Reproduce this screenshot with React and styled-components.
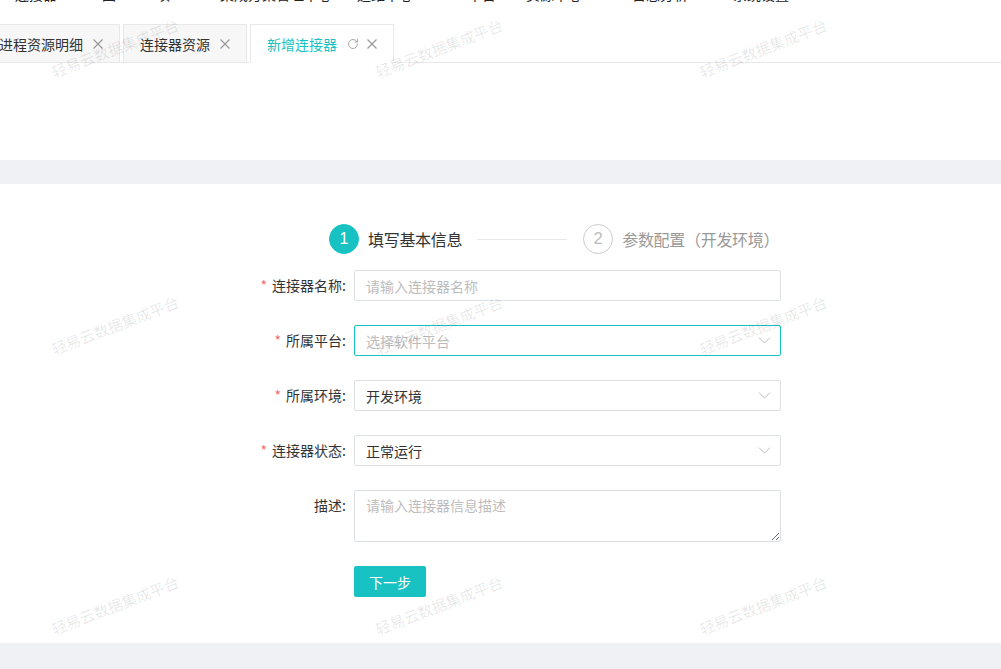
import React from "react";
import styled, { createGlobalStyle } from "styled-components";
import { RotateCw, ChevronDown } from "lucide-react";

const GlobalStyle = createGlobalStyle`
  html, body {
    margin: 0;
    padding: 0;
    background: #fff;
    font-family: "Noto Sans CJK SC", "Noto Sans", sans-serif;
    color: #333;
  }
  * { box-sizing: border-box; }
`;

const TEAL = "#19c2c2";

const menu = [
  { text: "连接器", ml: 15 },
  { text: "图", ml: 45 },
  { text: "项", ml: 40 },
  { text: "集成方案管理中心", ml: 50 },
  { text: "运维中心", ml: 25 },
  { text: "平台", ml: 55 },
  { text: "资源中心", ml: 30 },
  { text: "日志分析", ml: 50 },
  { text: "系统设置", ml: 45 },
];

const fields = [
  { label: "连接器名称", required: true, kind: "input", placeholder: "请输入连接器名称" },
  { label: "所属平台", required: true, kind: "select", placeholder: "选择软件平台", focus: true },
  { label: "所属环境", required: true, kind: "select", value: "开发环境" },
  { label: "连接器状态", required: true, kind: "select", value: "正常运行" },
  { label: "描述", kind: "textarea", placeholder: "请输入连接器信息描述" },
];

const marks = [];
[48, 325, 605].forEach((y) =>
  [115, 439, 763].forEach((x) => marks.push({ x, y }))
);

const CloseIcon = () => (
  <svg width="10" height="10" viewBox="0 0 10 10">
    <path d="M0.5 0.5 L9.5 9.5 M9.5 0.5 L0.5 9.5" stroke="#999" strokeWidth="1.2" fill="none" />
  </svg>
);

function App() {
  return (
    <Page>
      <GlobalStyle />
      <Nav>
        <NavRow>
          {menu.map((m, i) => (
            <NavItem key={i} $ml={m.ml}>{m.text}</NavItem>
          ))}
        </NavRow>
      </Nav>

      <TabBar>
        <Tab>
          进程资源明细
          <TabIcons><CloseIcon /></TabIcons>
        </Tab>
        <Tab>
          连接器资源
          <TabIcons><CloseIcon /></TabIcons>
        </Tab>
        <Tab $active>
          新增连接器
          <TabIcons>
            <RotateCw size={12} strokeWidth={1.7} />
            <CloseIcon />
          </TabIcons>
        </Tab>
      </TabBar>

      <TopBlank />
      <GrayBand $h={24} />

      <Card>
        <Steps>
          <StepCircle $active>1</StepCircle>
          <StepTitle $active>填写基本信息</StepTitle>
          <StepLine />
          <StepCircle>2</StepCircle>
          <StepTitle>参数配置（开发环境）</StepTitle>
        </Steps>

        <Form>
          {fields.map((f) => (
            <Row key={f.label} $tall={f.kind === "textarea"}>
              <Label>
                {f.required && <Star>*</Star>}
                {f.label}:
              </Label>
              {f.kind === "input" && <TextInput placeholder={f.placeholder} />}
              {f.kind === "textarea" && <TextArea placeholder={f.placeholder} />}
              {f.kind === "select" && (
                <Select $focus={f.focus}>
                  {f.value ? <span>{f.value}</span> : <Placeholder>{f.placeholder}</Placeholder>}
                  <ChevronDown size={21} strokeWidth={1} color="#b4b4b4" />
                </Select>
              )}
            </Row>
          ))}
          <ButtonRow>
            <NextButton>下一步</NextButton>
          </ButtonRow>
        </Form>
      </Card>

      <GrayBand $h={26} />

      {marks.map((m, i) => (
        <Watermark key={i} style={{ left: m.x, top: m.y }}>
          轻易云数据集成平台
        </Watermark>
      ))}
    </Page>
  );
}

const Page = styled.div`
  position: relative;
  width: 1001px;
  height: 669px;
  overflow: hidden;
  background: #fff;
`;

const Nav = styled.div`
  height: 8px;
  overflow: hidden;
`;

const NavRow = styled.div`
  display: flex;
  margin-top: -16px;
  height: 20px;
  align-items: flex-end;
`;

const NavItem = styled.span`
  margin-left: ${(p) => p.$ml}px;
  font-size: 14px;
  line-height: 20px;
  color: #222;
  white-space: nowrap;
`;

const TabBar = styled.div`
  display: flex;
  gap: 3px;
  margin-top: 16px;
  margin-left: -18px;
  height: 39px;
  border-bottom: 1px solid #e8e8e8;
  align-items: flex-end;
`;

const Tab = styled.div`
  display: flex;
  align-items: center;
  height: ${(p) => (p.$active ? "39px" : "38px")};
  margin-bottom: ${(p) => (p.$active ? "-1px" : "0")};
  padding: 0 16px 0 16px;
  font-size: 14px;
  color: ${(p) => (p.$active ? TEAL : "#333")};
  background: ${(p) => (p.$active ? "#fff" : "#f7f7f7")};
  border: 1px solid #e8e8e8;
  border-bottom: ${(p) => (p.$active ? "1px solid #fff" : "none")};
  white-space: nowrap;
`;

const TabIcons = styled.span`
  display: flex;
  align-items: center;
  gap: 8px;
  margin-left: 10px;
  color: #999;
`;

const TopBlank = styled.div`
  height: 97px;
`;

const GrayBand = styled.div`
  height: ${(p) => p.$h}px;
  background: #f0f1f5;
`;

const Card = styled.div`
  height: 459px;
  padding-top: 40px;
`;

const Steps = styled.div`
  display: flex;
  align-items: center;
  margin-left: 329px;
  height: 30px;
`;

const StepCircle = styled.div`
  width: 30px;
  height: 30px;
  border-radius: 50%;
  display: flex;
  align-items: center;
  justify-content: center;
  font-size: 16px;
  font-family: "Liberation Sans", Arial, sans-serif;
  color: ${(p) => (p.$active ? "#fff" : "#bbb")};
  background: ${(p) => (p.$active ? TEAL : "#fff")};
  border: 1px solid ${(p) => (p.$active ? TEAL : "#ccc")};
`;

const StepTitle = styled.div`
  margin-left: 9px;
  font-size: 16px;
  letter-spacing: -0.3px;
  color: ${(p) => (p.$active ? "#333" : "#999")};
`;

const StepLine = styled.div`
  width: 90px;
  height: 1px;
  background: #e8e8e8;
  margin: 0 16px 0 15px;
`;

const Form = styled.div`
  display: flex;
  flex-direction: column;
  gap: 24px;
  margin-top: 16px;
  margin-left: 250px;
  width: 531px;
`;

const Row = styled.div`
  display: grid;
  grid-template-columns: 104px 1fr;
  align-items: start;
  height: ${(p) => (p.$tall ? "52px" : "31px")};
`;

const Label = styled.div`
  text-align: right;
  padding-right: 8px;
  font-size: 14px;
  line-height: 31px;
  color: #333;
  white-space: nowrap;
`;

const Star = styled.span`
  color: #f56c6c;
  margin-right: 5px;
`;

const fieldBase = `
  width: 100%;
  border: 1px solid #dcdfe6;
  border-radius: 2px;
  font-size: 14px;
  font-family: "Noto Sans CJK SC", "Noto Sans", sans-serif;
  color: #333;
  padding: 0 11px;
  outline: none;
  background: #fff;
  &::placeholder { color: #bdbdbd; }
`;

const TextInput = styled.input`
  ${fieldBase}
  height: 31px;
`;

const TextArea = styled.textarea`
  ${fieldBase}
  height: 52px;
  padding-top: 4px;
  resize: vertical;
  line-height: 20px;
`;

const Select = styled.div`
  ${fieldBase}
  height: 31px;
  display: flex;
  align-items: center;
  justify-content: space-between;
  padding-right: 5px;
  border-color: ${(p) => (p.$focus ? TEAL : "#dcdfe6")};
`;

const Placeholder = styled.span`
  color: #bdbdbd;
`;

const ButtonRow = styled.div`
  padding-left: 104px;
`;

const NextButton = styled.button`
  width: 72px;
  height: 31px;
  border: none;
  border-radius: 2px;
  background: ${TEAL};
  color: #fff;
  font-size: 14px;
  font-family: "Noto Sans CJK SC", "Noto Sans", sans-serif;
`;

const Watermark = styled.div`
  position: absolute;
  transform: translate(-50%, -50%) rotate(-21deg);
  font-size: 15px;
  color: rgba(0, 0, 0, 0.1);
  white-space: nowrap;
  pointer-events: none;
  user-select: none;
`;

export default App;
